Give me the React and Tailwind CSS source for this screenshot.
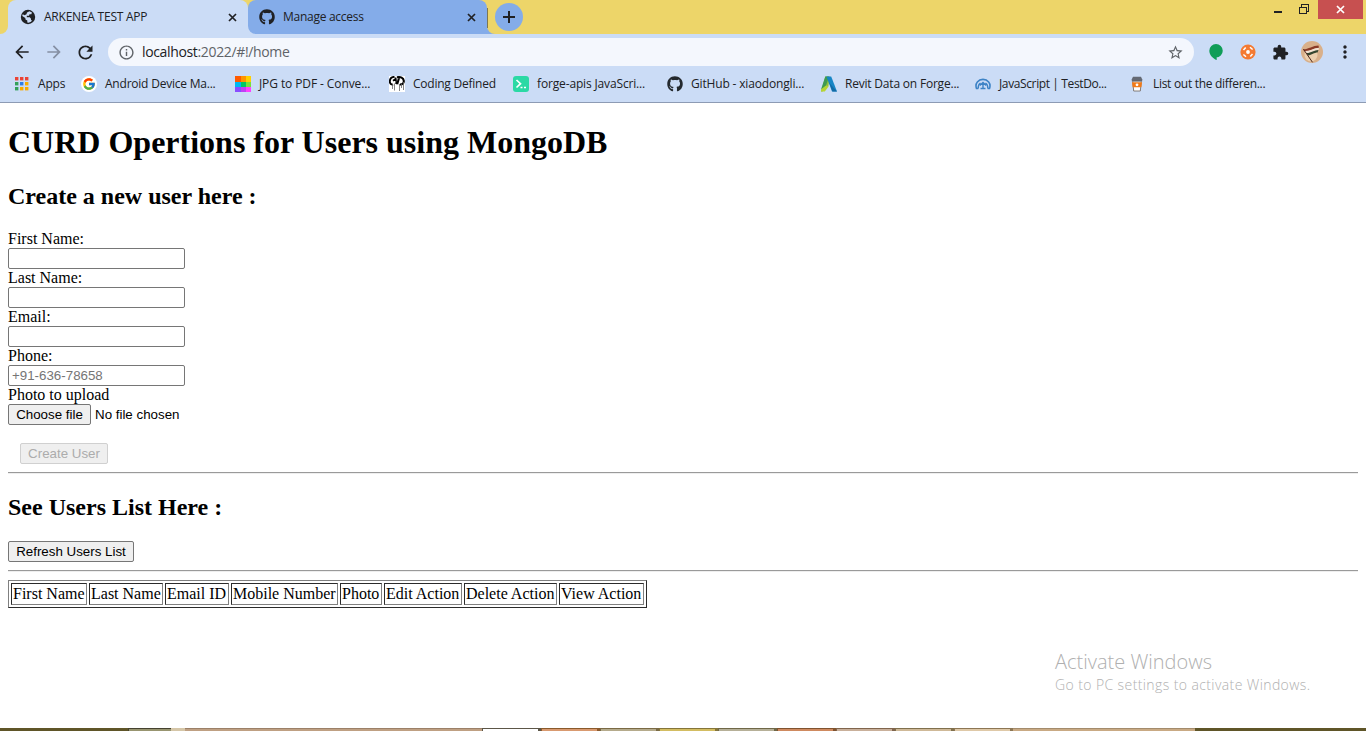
import React from 'react';
import { FcGoogle } from 'react-icons/fc';
import { FaGithub } from 'react-icons/fa';
import { MdArrowBack, MdArrowForward, MdRefresh, MdInfoOutline, MdStarBorder, MdExtension, MdMoreVert } from 'react-icons/md';

const GlobeIcon = () => (
  <svg className="h-4 w-4 shrink-0" viewBox="0 0 16 16">
    <circle cx="8" cy="8" r="7.2" fill="#202124" />
    <path d="M9.500 2.300L12 3.600 11.300 5.200H9.500L9 6.800H6.800V8.300H9.800L11 9.800V11.200H12.200L11 12.800 8.500 13.800 7.300 13.600V11.600L5.500 10.600 5.300 9 2.300 6.900C2.300 6.300 2.500 5.800 2.800 5.300L4.500 6.300 6.500 5.300 7 3.600Z" fill="#cbdcf6" />
  </svg>
);
const Close = ({ className = '' }) => (
  <svg className={`h-[9px] w-[9px] shrink-0 ${className}`} viewBox="0 0 9 9"><path d="M1 1l7 7M8 1L1 8" stroke="currentColor" strokeWidth="1.7" /></svg>
);
const AppsIcon = () => {
  const c = ['#ea4335', '#ea4335', '#ea4335', '#34a05a', '#2f7de9', '#f9ab00', '#34a05a', '#f9ab00', '#f9ab00'];
  return (
    <svg className="ml-px h-[14px] w-[14px] shrink-0" viewBox="0 0 14 14">
      {c.map((f, i) => <rect key={i} x={(i % 3) * 5} y={Math.floor(i / 3) * 5} width="3.400" height="3.400" fill={f} />)}
    </svg>
  );
};
const RainbowIcon = () => {
  const c = ['#ff5a00', '#ff9500', '#ffd000', '#00b8f0', '#00c864', '#78e03c', '#8a4dff', '#c040f5', '#ff40ff'];
  return (
    <svg className="h-4 w-4 shrink-0" viewBox="0 0 16 16" shapeRendering="crispEdges">
      {c.map((f, i) => <rect key={i} x={[0, 6, 11][i % 3]} y={[0, 6, 11][Math.floor(i / 3)]} width="6" height="6" fill={f} />)}
    </svg>
  );
};
const CodingIcon = () => (
  <svg className="h-4 w-4 shrink-0" viewBox="0 0 16 16">
    <rect width="16" height="16" fill="#fff" />
    <path d="M5.500.800C2.500 1 .8 3 .8 5.500c0 2.300 1.700 3.500 3.300 3M4 4.800l3-2M6.500 1.500l.5 4" fill="none" stroke="#000" strokeWidth="1.900" />
    <path d="M8 1.300c3.500-.8 6.500.5 6.800 3.500.2 2.500-1.800 4.200-4 3.500M10 2l-1.800 6.300M8 5.500L7 8" fill="none" stroke="#000" strokeWidth="2.100" />
    <path d="M3.500 8v5M5.500 7.500v7M10.500 8v7M12.500 8v4M14.500 6v8" stroke="#666" strokeWidth=".8" />
  </svg>
);
const TerminalIcon = () => (
  <svg className="h-4 w-4 shrink-0" viewBox="0 0 16 16">
    <rect width="16" height="16" rx="3" fill="#2bd9a5" />
    <path d="M3.500 4l4 3.700-4 3.800" fill="none" stroke="#fff" strokeWidth="1.700" />
    <path d="M7.500 11.500h2M11 11.500h2" stroke="#fff" strokeWidth="1.500" />
  </svg>
);
const AutodeskIcon = () => (
  <svg className="h-4 w-4 shrink-0" viewBox="0 0 16 16">
    <path d="M4.300.5h4.500L7.500 9.500 1.500 15.500H0z" fill="#8cbf3f" />
    <path d="M4.300.5L0 13.500l5-3.700L8 .5z" fill="#3f9a52" />
    <path d="M0 15.500v-2L5 9.500l2.800.8-4 5.200z" fill="#b7d433" />
    <path d="M5.500.5h4.700L16 15.500h-5z" fill="#1685c5" />
    <path d="M8 6.500l3.500 9H16l-4.500-5z" fill="#126aa5" />
  </svg>
);
const DomeIcon = () => (
  <svg className="h-4 w-4 shrink-0" viewBox="0 0 16 16" fill="none" stroke="#3d83c6" strokeWidth="1.600">
    <path d="M3.300 12.500H1.500C-.4 7 3.500 3.400 8 3.400s8.400 3.600 6.500 9.100h-1.800" />
    <path d="M8 13V7M4.800 9.500L8 6.500l3.200 3M3.200 12.500C3 10 3.500 8.300 5.500 7M12.800 12.500c.2-2.500-.3-4.200-2.300-5.500M5.500 12.500h5" strokeWidth="1.400" />
  </svg>
);
const CupIcon = () => (
  <svg className="h-4 w-4 shrink-0" viewBox="0 0 16 16">
    <path d="M4 .8h8l1.200 2.400v2H2.800v-2z" fill="#646974" />
    <path d="M3.700 5.200h8.600l-1 9.800H4.700z" fill="#fff" stroke="#6b6058" strokeWidth=".8" />
    <path d="M3 6.300h10l-.6 5H3.600z" fill="#f17a18" />
    <circle cx="8" cy="8.800" r="1.400" fill="#fff" />
  </svg>
);
const ScatterIcon = () => (
  <svg className="h-4 w-4 shrink-0" viewBox="0 0 16 16">
    <circle cx="8" cy="8" r="7.600" fill="#f47a32" />
    <circle cx="8" cy="8" r="1.900" fill="#fff" />
    <path d="M3.500 6l2.200-2.500M10 3.300l2.600 2.200M12.500 10l-2.200 2.500M6 12.700l-2.600-2.200" stroke="#fff" strokeWidth="1.500" />
  </svg>
);
const Avatar = () => (
  <svg className="h-[22px] w-[22px] shrink-0" viewBox="0 0 22 22">
    <circle cx="11" cy="11" r="11" fill="#d9b08a" />
    <circle cx="10" cy="14" r="6.500" fill="#ecd0ae" />
    <path d="M2 8.300C7 8.500 12 4.500 17.500 4.500L18 7C13 7 9 10.500 3.500 10.500z" fill="#8a3a26" />
    <path d="M3.500 10C9 10.500 13 7 18 6.800l-.5 2.400C13 9.500 10 12.500 5 12.500z" fill="#f3e2d2" />
    <path d="M5 12c5 .3 8-3 12.500-3l-1 2.500C13 11.500 11 14 7 14.500z" fill="#35462f" />
    <path d="M2.500 8.300l9 13" stroke="#4b241a" strokeWidth="1" />
  </svg>
);

const bookmarks = [
  { icon: <AppsIcon />, text: 'Apps', box: 'w-[67px] gap-[9px]', track: 'tracking-[-0.2px]' },
  { icon: <span className="flex h-4 w-4 shrink-0 items-center justify-center rounded-full bg-white"><FcGoogle size={14} /></span>, text: 'Android Device Ma...', box: 'w-[154px] gap-2', track: 'tracking-[-0.22px]' },
  { icon: <RainbowIcon />, text: 'JPG to PDF - Conve...', box: 'w-[154px] gap-2', track: 'tracking-[-0.1px]' },
  { icon: <CodingIcon />, text: 'Coding Defined', box: 'w-[124px] gap-2', track: 'tracking-[-0.23px]' },
  { icon: <TerminalIcon />, text: 'forge-apis JavaScri...', box: 'w-[154px] gap-2', track: 'tracking-[-0.15px]' },
  { icon: <FaGithub size={16} color="#24292e" className="shrink-0" />, text: 'GitHub - xiaodongli...', box: 'w-[154px] gap-2', track: 'tracking-[-0.16px]' },
  { icon: <AutodeskIcon />, text: 'Revit Data on Forge...', box: 'w-[154px] gap-2', track: 'tracking-[-0.2px]' },
  { icon: <DomeIcon />, text: 'JavaScript | TestDo...', box: 'w-[154px] gap-2', track: 'tracking-[-0.38px]' },
  { icon: <CupIcon />, text: 'List out the differen...', box: 'w-[154px] gap-2', track: 'tracking-[-0.3px]' },
];

const Browser = () => (
  <header className="h-[103px] border-b border-[#8d9bb4] bg-[#cbdcf6] font-['Open_Sans',sans-serif] text-xs text-[#202124]">
    <div className="flex h-[34px] bg-[#cbdcf6]">
      <div className="w-2 rounded-br-lg bg-[#edd569]" />
      <div className="flex w-60 bg-[#edd569]">
        <div className="flex w-full items-center rounded-t-lg bg-[#cbdcf6] pl-3">
          <GlobeIcon />
          <span className="ml-2 w-[176px] tracking-[-0.23px] whitespace-nowrap">ARKENEA TEST APP</span>
          <Close className="ml-[7.500px]" />
        </div>
      </div>
      <div className="flex w-[239px] bg-[linear-gradient(#edd569_50%,#cbdcf6_50%)]">
        <div className="flex w-full items-center rounded-t-lg rounded-bl-lg bg-[#84ace9] pl-[11px]">
          <FaGithub size={16} />
          <span className="ml-2 w-[176px] tracking-[-0.27px] whitespace-nowrap">Manage access</span>
          <Close className="ml-[7.500px]" />
        </div>
      </div>
      <div className="flex flex-1 bg-[#84ace9]">
        <div className="flex flex-1 rounded-bl-lg bg-[#edd569]">
          <div className="mt-2 h-5 w-px bg-[#7d7752]" />
          <div className="mt-[3px] ml-[7px] flex h-7 w-7 items-center justify-center rounded-full bg-[#84ace9]">
            <svg className="h-3 w-3" viewBox="0 0 12 12"><path d="M6 0v12M0 6h12" stroke="#202124" strokeWidth="2" /></svg>
          </div>
          <div className="flex-1" />
          <svg className="mt-[11px] mr-[17px] h-[2px] w-2" viewBox="0 0 8 2"><path d="M0 0h8v2H0z" fill="#202124" /></svg>
          <svg className="mt-1 mr-[9px] h-[10px] w-[10px]" viewBox="0 0 10 10" fill="none" stroke="#202124" shapeRendering="crispEdges"><path d="M.5 3.500h7v6h-7zM0 3h8M2.500 3V.5h7v7H8" /></svg>
          <div className="mr-[3px] flex h-[19px] w-[45px] items-center justify-center bg-[#c75050] text-white"><Close /></div>
        </div>
      </div>
    </div>
    <div className="flex h-9 items-center">
      <MdArrowBack size={20} className="ml-3" />
      <MdArrowForward size={20} className="ml-3 text-[#858fa3]" />
      <MdRefresh size={21} className="ml-[11px]" />
      <div className="ml-3 flex h-7 w-[1086px] items-center rounded-full bg-[#f4f7fd] px-2.5">
        <MdInfoOutline size={17} className="text-[#5f6368]" />
        <span className="ml-[7px] flex-1 text-sm tracking-[-0.35px] text-[#5f6368]"><span className="text-[#202124]">localhost</span>:2022/#!/home</span>
        <MdStarBorder size={17} className="text-[#5f6368]" />
      </div>
      <svg className="ml-[14px] h-4 w-4" viewBox="0 0 16 16"><path d="M8 0a6.700 6.700 0 1 1 0 13.500h.7V16C5 14.500 1.300 11 1.300 6.700A6.700 6.700 0 0 1 8 0z" fill="#109d58" /></svg>
      <span className="ml-4"><ScatterIcon /></span>
      <MdExtension size={17} className="ml-4" />
      <span className="ml-3"><Avatar /></span>
      <MdMoreVert size={20} className="ml-3" />
    </div>
    <div className="flex h-7 items-center pl-[14px]">
      {bookmarks.map((b) => (
        <div key={b.text} className={`flex shrink-0 items-center ${b.box}`}>
          {b.icon}<span className={`whitespace-nowrap ${b.track}`}>{b.text}</span>
        </div>
      ))}
    </div>
  </header>
);

const Field = ({ label, placeholder }) => (
  <label className="block leading-[18px]">
    {label}
    <input placeholder={placeholder} className="block h-[21px] w-[177px] rounded-[2px] border border-[#767676] bg-white px-[3px] font-['Liberation_Sans',sans-serif] text-[13.333px] placeholder:text-[#757575]" />
  </label>
);
const Button = ({ children, className = '', disabled }) => (
  <button disabled={disabled} className={`block h-[21px] rounded-[2px] border border-[#767676] bg-[#efefef] text-center font-['Liberation_Sans',sans-serif] text-[13.333px] leading-[19px] whitespace-nowrap disabled:border-[#d0d0d0] disabled:text-[#acacac] ${className}`}>{children}</button>
);
const Rule = ({ className = '' }) => <hr className={`h-[2px] border-t border-b border-t-[#9a9a9a] border-b-[#eeeeee] ${className}`} />;

const columns = [
  ['First Name', 'w-[76px]'], ['Last Name', 'w-[74px]'], ['Email ID', 'w-[64px]'], ['Mobile Number', 'w-[107px]'],
  ['Photo', 'w-[42px]'], ['Edit Action', 'w-[78px]'], ['Delete Action', 'w-[93px]'], ['View Action', 'w-[85px]'],
];

const tasks = [
  'bg-[#ffffff] border-[#5c5648]', 'bg-[#d99a70] border-[#8a5a2c]', 'bg-[#b5ab8c] border-[#7a6a45]', 'bg-[#d3bd62] border-[#85753a]', 'bg-[#b6b098] border-[#6f6848]',
  'bg-[#cf8a60] border-[#80532f]', 'bg-[#c9b09b] border-[#80654d]', 'bg-[#cfb998] border-[#80704d]', 'bg-[#dfc9a8] border-[#8c7654]',
];

export default function App() {
  return (
    <div className="flex h-[731px] w-[1366px] flex-col overflow-hidden bg-white font-['Liberation_Serif',serif] text-base leading-[18px] text-black">
      <Browser />
      <main className="relative h-[625px] px-2">
        <h1 className="pt-[21px] text-[32px] leading-[37px] font-bold">CURD Opertions for Users using MongoDB</h1>
        <h2 className="mt-[22px] text-2xl leading-[27px] font-bold">Create a new user here :</h2>
        <div className="mt-5">
          <Field label="First Name:" />
          <Field label="Last Name:" />
          <Field label="Email:" />
          <Field label="Phone:" placeholder="+91-636-78658" />
          <div>Photo to upload</div>
          <div className="flex items-center gap-1">
            <Button className="w-[83px]">Choose file</Button>
            <span className="font-['Liberation_Sans',sans-serif] text-[13.333px]">No file chosen</span>
          </div>
        </div>
        <Button disabled className="mt-[18px] ml-3 w-[88px]">Create User</Button>
        <Rule className="mt-2" />
        <h2 className="mt-5 text-2xl leading-[27px] font-bold">See Users List Here :</h2>
        <Button className="mt-5 w-[126px]">Refresh Users List</Button>
        <Rule className="mt-2" />
        <table className="mt-2 w-[639px] table-fixed border-separate border-spacing-[2px] border border-t-[#808080] border-r-[#2b2b2b] border-b-[#2b2b2b] border-l-[#808080]">
          <tbody>
            <tr>
              {columns.map(([name, w]) => (
                <td key={name} className={`border border-t-[#2b2b2b] border-r-[#808080] border-b-[#808080] border-l-[#2b2b2b] p-px whitespace-nowrap ${w}`}>{name}</td>
              ))}
            </tr>
          </tbody>
        </table>
        <div className="absolute top-[547px] left-[1055px] font-['Open_Sans',sans-serif] font-light whitespace-nowrap text-[#b0b0b0]">
          <div className="text-xl leading-6">Activate Windows</div>
          <div className="text-sm leading-[22px] tracking-[0.4px]">Go to PC settings to activate Windows.</div>
        </div>
      </main>
      <footer className="flex h-[3px] bg-[#5f5528]">
        <div className="w-32" />
        <div className="w-[43px] border-t border-l border-[#45422f] bg-[#989570]" />
        <div className="w-[14px] bg-[#d5c6a8]" />
        <div className="w-[297px] border-t border-[#9b8068] bg-[#bfa083]" />
        {tasks.map((t) => <div key={t} className={`w-[59px] border-t border-r-[3px] border-l ${t}`} />)}
        <div className="w-[182px] border-t border-[#a38b6c] bg-[#c9aa84]" />
      </footer>
    </div>
  );
}
